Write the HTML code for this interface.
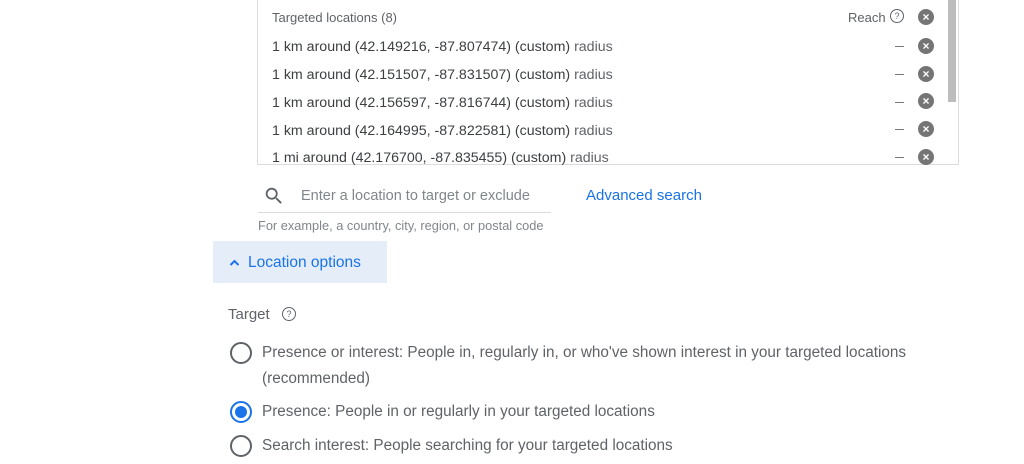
<!DOCTYPE html>
<html><head><style>
body{margin:0;width:1024px;height:464px;background:#fff;font-family:"Liberation Sans",sans-serif;position:relative;overflow:hidden;color:#5f6368}
.a{position:absolute;white-space:nowrap}
.box{position:absolute;left:257px;top:-2px;width:700px;height:166px;border:1px solid #dadce0;border-top:none}
.row{position:absolute;left:272px;font-size:14.2px;color:#3c4043}
.x{position:absolute;left:918px;width:16px;height:16px;border-radius:50%;background:#757575;color:#fff;font-size:12px;line-height:16px;text-align:center;font-weight:bold}
.d{position:absolute;left:895px;width:9px;height:1px;background:#777}
.r{position:absolute;left:230px;width:18px;height:18px;border:2px solid #5f6368;border-radius:50%}
.t{position:absolute;left:262px;font-size:15.3px;color:#5f6368}
.q{position:absolute;width:12px;height:12px;border:1.3px solid #5f6368;border-radius:50%;font-size:9px;line-height:12px;text-align:center}
</style></head><body>
<div class="box"></div>
<div class="a" style="left:948px;top:0;width:8px;height:102px;background:#bdbdbd"></div>
<div class="row a" style="top:10px;font-size:13px;color:#5f6368">Targeted locations (8)</div>
<div class="a" style="left:848px;top:10px;font-size:13px">Reach</div>
<div class="q a" style="left:890px;top:9px">?</div>
<div class="x" style="top:9px">×</div>
<div class="row a" style="top:39px">1 km around (42.149216, -87.807474) (custom) <span style="color:#5f6368">radius</span></div>
<div class="row a" style="top:67px">1 km around (42.151507, -87.831507) (custom) <span style="color:#5f6368">radius</span></div>
<div class="row a" style="top:95px">1 km around (42.156597, -87.816744) (custom) <span style="color:#5f6368">radius</span></div>
<div class="row a" style="top:123px">1 km around (42.164995, -87.822581) (custom) <span style="color:#5f6368">radius</span></div>
<div class="row a" style="top:150px">1 mi around (42.176700, -87.835455) (custom) <span style="color:#5f6368">radius</span></div>
<div class="d" style="top:46px"></div><div class="x" style="top:38px">×</div>
<div class="d" style="top:74px"></div><div class="x" style="top:66px">×</div>
<div class="d" style="top:102px"></div><div class="x" style="top:93px">×</div>
<div class="d" style="top:129px"></div><div class="x" style="top:121px">×</div>
<div class="d" style="top:157px"></div><div class="x" style="top:149px">×</div>
<svg class="a" style="left:263px;top:185px" width="22" height="22" viewBox="0 0 24 24"><path fill="#5f6368" d="M15.5 14h-.79l-.28-.27A6.47 6.47 0 0 0 16 9.5 6.5 6.5 0 1 0 9.5 16c1.61 0 3.09-.59 4.23-1.57l.27.28v.79l5 4.99L20.49 19l-4.99-5zm-6 0C7.01 14 5 11.99 5 9.5S7.01 5 9.5 5 14 7.01 14 9.5 11.99 14 9.5 14z"/></svg>
<div class="a" style="left:301px;top:188px;font-size:14.5px;color:#80868b">Enter a location to target or exclude</div>
<div class="a" style="left:258px;top:212px;width:293px;height:1px;background:#dadce0"></div>
<div class="a" style="left:586px;top:187px;font-size:15px;color:#1a73e8">Advanced search</div>
<div class="a" style="left:258px;top:218px;font-size:12.8px;color:#80868b">For example, a country, city, region, or postal code</div>
<div class="a" style="left:213px;top:241px;width:174px;height:42px;background:#e5edf9"></div>
<svg class="a" style="left:228px;top:257px" width="13" height="12" viewBox="0 0 12 12"><path d="M2 8 L6 4 L10 8" fill="none" stroke="#1a73e8" stroke-width="2"/></svg>
<div class="a" style="left:248px;top:254px;font-size:15.5px;color:#1a73e8">Location options</div>
<div class="a" style="left:228px;top:306px;font-size:15px">Target</div>
<div class="q a" style="left:282px;top:307px">?</div>
<div class="r" style="top:342px"></div>
<div class="t a" style="top:344px">Presence or interest: People in, regularly in, or who've shown interest in your targeted locations</div>
<div class="t a" style="top:370px">(recommended)</div>
<div class="r" style="top:401px;border-color:#1a73e8"></div>
<div class="a" style="left:235px;top:406px;width:12px;height:12px;border-radius:50%;background:#1a73e8"></div>
<div class="t a" style="top:403px">Presence: People in or regularly in your targeted locations</div>
<div class="r" style="top:435px"></div>
<div class="t a" style="top:437px">Search interest: People searching for your targeted locations</div>
</body></html>
